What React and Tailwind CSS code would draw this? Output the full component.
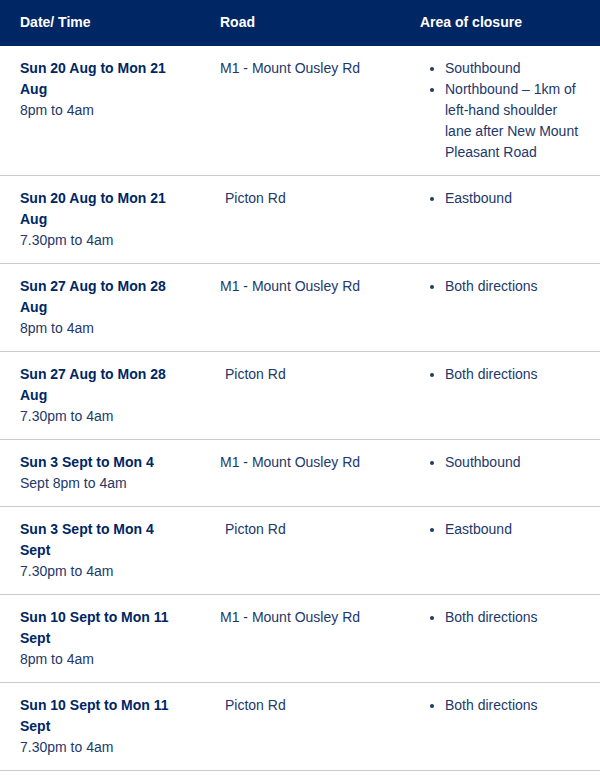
const rows = [
  { date: "Sun 20 Aug to Mon 21 Aug", time: "8pm to 4am", road: "M1 - Mount Ousley Rd", area: ["Southbound", "Northbound – 1km of left-hand shoulder lane after New Mount Pleasant Road"] },
  { date: "Sun 20 Aug to Mon 21 Aug", time: "7.30pm to 4am", road: "Picton Rd", indent: true, area: ["Eastbound"] },
  { date: "Sun 27 Aug to Mon 28 Aug", time: "8pm to 4am", road: "M1 - Mount Ousley Rd", area: ["Both directions"] },
  { date: "Sun 27 Aug to Mon 28 Aug", time: "7.30pm to 4am", road: "Picton Rd", indent: true, area: ["Both directions"] },
  { date: "Sun 3 Sept to Mon 4", time: "Sept 8pm to 4am", road: "M1 - Mount Ousley Rd", area: ["Southbound"] },
  { date: "Sun 3 Sept to Mon 4 Sept", time: "7.30pm to 4am", road: "Picton Rd", indent: true, area: ["Eastbound"] },
  { date: "Sun 10 Sept to Mon 11 Sept", time: "8pm to 4am", road: "M1 - Mount Ousley Rd", area: ["Both directions"] },
  { date: "Sun 10 Sept to Mon 11 Sept", time: "7.30pm to 4am", road: "Picton Rd", indent: true, area: ["Both directions"] },
];

const App = () => {
  return (
    <div className="w-[600px] bg-white font-['Liberation_Sans',Arial,sans-serif] text-[14px]">
      <table className="w-full table-fixed border-collapse">
        <thead>
          <tr className="bg-[#002664] text-white">
            <th className="w-[200px] px-5 pt-3 pb-[14px] text-left font-bold leading-5">Date/ Time</th>
            <th className="w-[200px] px-5 pt-3 pb-[14px] text-left font-bold leading-5">Road</th>
            <th className="w-[200px] px-5 pt-3 pb-[14px] text-left font-bold leading-5">Area of closure</th>
          </tr>
        </thead>
        <tbody>
          {rows.map((r, i) => (
            <tr key={i} className="border-b border-[#cccccc] align-top leading-[21px] text-[#22386a]">
              <td className="px-5 py-3">
                <strong className="text-[#002664]">{r.date}</strong>
                <br />
                {r.time}
              </td>
              <td className="px-5 py-3">
                <span className={r.indent ? "pl-[5px]" : ""}>{r.road}</span>
              </td>
              <td className="px-5 py-3">
                <ul className="list-disc pl-[25px] m-0">
                  {r.area.map((a, j) => (
                    <li key={j}>{a}</li>
                  ))}
                </ul>
              </td>
            </tr>
          ))}
        </tbody>
      </table>
    </div>
  );
};

export default App;
